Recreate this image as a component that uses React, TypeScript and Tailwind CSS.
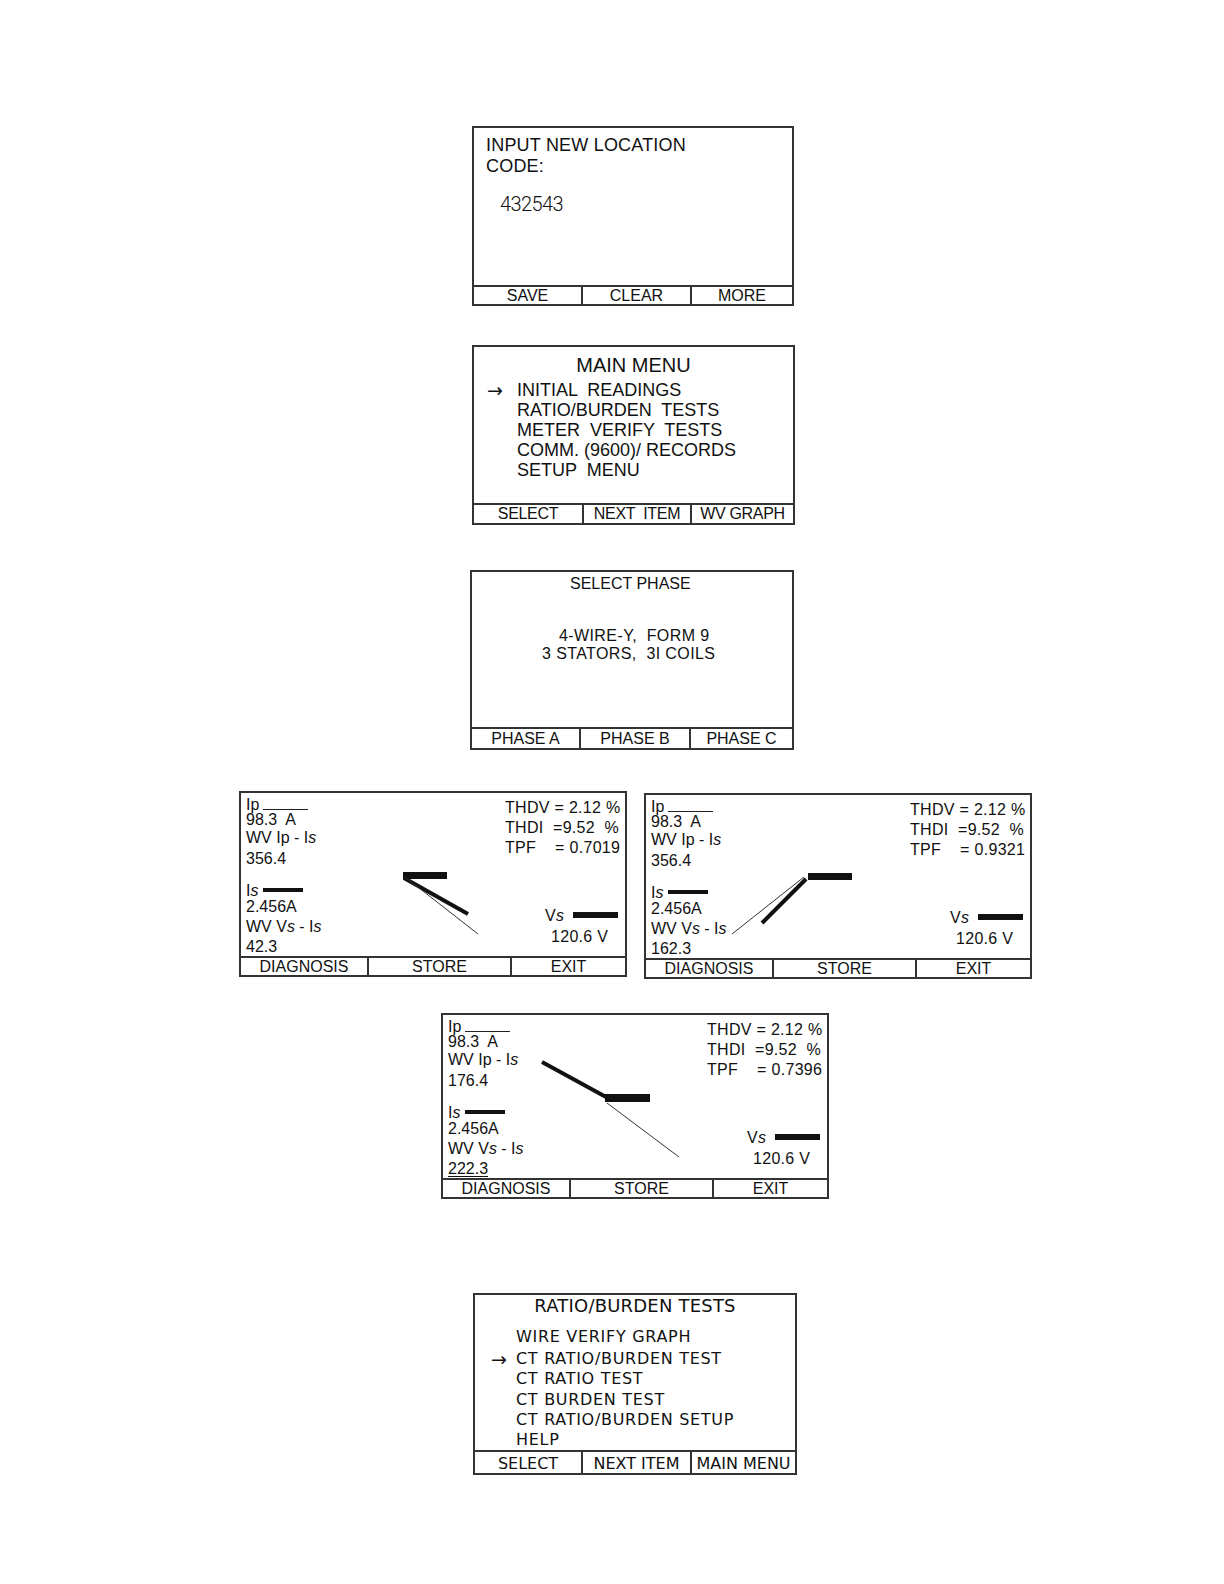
import type { ReactNode } from 'react';

const arial = "font-['Liberation_Sans',Arial,sans-serif]";
const dejavu = "font-['DejaVu_Sans',sans-serif]";

type KeysProps = { labels: string[]; cols: string; className?: string };

function SoftKeys({ labels, cols, className = '' }: KeysProps) {
  return (
    <div className={`grid shrink-0 border-t-2 border-[#333] ${cols} ${className}`}>
      {labels.map((label, i) => (
        <div key={label} className={`whitespace-pre text-center ${i > 0 ? 'border-l-2 border-[#333]' : ''}`}>
          {label}
        </div>
      ))}
    </div>
  );
}

function LocationScreen() {
  return (
    <div className={`ml-[472px] mt-[126px] flex h-[180px] w-[322px] flex-col border-2 border-[#333] ${arial}`}>
      <div className="flex-1 pl-[12px] pt-[7px]">
        <div className="text-[18px] leading-[21px] tracking-[0.2px]">INPUT NEW LOCATION</div>
        <div className="text-[18px] leading-[21px] tracking-[0.2px]">CODE:</div>
        <div className="ml-[14px] mt-[15px] font-['Roboto',sans-serif] text-[20px] font-light leading-[24px] tracking-[-0.6px]">
          432543
        </div>
      </div>
      <SoftKeys labels={['SAVE', 'CLEAR', 'MORE']} cols="grid-cols-[107px_109px_1fr]" className="h-[19px] text-[16px] leading-[17px]" />
    </div>
  );
}

type RowProps = { active?: boolean; children: ReactNode; className: string; slot: string };

function MenuRow({ active, children, className, slot }: RowProps) {
  return (
    <div className={`flex whitespace-pre ${className}`}>
      <span className={`font-['DejaVu_Sans',sans-serif] text-[19px] tracking-normal ${slot}`}>{active ? '→' : ''}</span>
      <span>{children}</span>
    </div>
  );
}

function MainMenu() {
  const items = ['INITIAL  READINGS', 'RATIO/BURDEN  TESTS', 'METER  VERIFY  TESTS', 'COMM. (9600)/ RECORDS', 'SETUP  MENU'];
  return (
    <div className={`ml-[472px] mt-[39px] flex h-[180px] w-[323px] flex-col border-2 border-[#333] ${arial}`}>
      <div className="flex-1 pt-[7px]">
        <div className="text-center text-[20px] leading-[22px]">MAIN MENU</div>
        <div className="mt-[4px] pl-[13px] text-[18px] leading-[20px]">
          {items.map((item, i) => (
            <MenuRow key={item} active={i === 0} className="h-[20px]" slot="w-[30px]">
              {item}
            </MenuRow>
          ))}
        </div>
      </div>
      <SoftKeys labels={['SELECT', 'NEXT  ITEM', 'WV GRAPH']} cols="grid-cols-[108px_108px_1fr]" className="h-[20px] text-[16px] leading-[18px] tracking-[-0.3px]" />
    </div>
  );
}

function PhaseScreen() {
  return (
    <div className={`ml-[470px] mt-[45px] flex h-[180px] w-[324px] flex-col border-2 border-[#333] ${arial}`}>
      <div className="flex-1 pt-[3px] text-[16px] leading-[18px] whitespace-pre">
        <div className="pl-[98px]">SELECT PHASE</div>
        <div className="mt-[34px] pl-[87px] tracking-[0.4px]">4-WIRE-Y,  FORM 9</div>
        <div className="pl-[70px] tracking-[0.4px]">3 STATORS,  3I COILS</div>
      </div>
      <SoftKeys labels={['PHASE A', 'PHASE B', 'PHASE C']} cols="grid-cols-[107px_110px_1fr]" className="h-[21px] text-[16px] leading-[19px]" />
    </div>
  );
}

type Vec = { bar: [number, number, number, number]; thick: [number, number, number, number]; thin: [number, number, number, number] };

type GraphProps = { wv1: string; wv2: string; tpf: string; underline?: boolean; vec: Vec; className: string };

function GraphScreen({ wv1, wv2, tpf, underline, vec, className }: GraphProps) {
  return (
    <div className={`flex h-[186px] w-[388px] flex-col border-2 border-[#333] ${arial} ${className}`}>
      <div className="relative flex flex-1 text-[16px]">
        <svg className="pointer-events-none absolute left-0 top-0" width="384" height="162" viewBox="0 0 384 162">
          <rect x={vec.bar[0]} y={vec.bar[1]} width={vec.bar[2]} height={vec.bar[3]} fill="#111" />
          <line x1={vec.thick[0]} y1={vec.thick[1]} x2={vec.thick[2]} y2={vec.thick[3]} stroke="#111" strokeWidth="4" />
          <line x1={vec.thin[0]} y1={vec.thin[1]} x2={vec.thin[2]} y2={vec.thin[3]} stroke="#333" strokeWidth="1" />
        </svg>
        <div className="w-[264px] shrink-0 pl-[5px] pt-[3px] leading-[18px] whitespace-pre">
          <div className="h-[15px]">
            Ip<span className="ml-[4px] inline-block w-[45px] border-b border-[#222]" />
          </div>
          <div className="h-[18px]">98.3  A</div>
          <div className="h-[21px]">
            WV Ip - I<i>s</i>
          </div>
          <div className="h-[32px]">{wv1}</div>
          <div className="h-[16px]">
            I<i>s</i>
            <span className="ml-[5px] inline-block h-[4px] w-[40px] bg-[#111] align-[4px]" />
          </div>
          <div className="h-[20px]">2.456A</div>
          <div className="h-[20px]">
            WV V<i>s</i> - I<i>s</i>
          </div>
          <div className={underline ? 'underline underline-offset-[2px]' : ''}>{wv2}</div>
        </div>
        <div className="flex flex-col pt-[5px] leading-[20px] tracking-[0.3px] whitespace-pre">
          <div>THDV = 2.12 %</div>
          <div>THDI  =9.52  %</div>
          <div>TPF    = {tpf}</div>
          <div className="ml-[40px] mt-[48px] h-[21px]">
            V<i>s</i>
            <span className="ml-[9px] inline-block h-[6px] w-[45px] bg-[#111] align-[3px]" />
          </div>
          <div className="ml-[46px]">120.6 V</div>
        </div>
      </div>
      <SoftKeys labels={['DIAGNOSIS', 'STORE', 'EXIT']} cols="grid-cols-[126px_143px_1fr]" className="h-[20px] text-[16px] leading-[18px]" />
    </div>
  );
}

function RatioBurdenMenu() {
  const items = ['WIRE VERIFY GRAPH', 'CT RATIO/BURDEN TEST', 'CT RATIO TEST', 'CT BURDEN TEST', 'CT RATIO/BURDEN SETUP', 'HELP'];
  return (
    <div className={`ml-[473px] mt-[94px] flex h-[182px] w-[324px] flex-col border-2 border-[#333] ${dejavu}`}>
      <div className="flex-1">
        <div className="text-center text-[18px] leading-[22px] tracking-[0.2px]">RATIO/BURDEN TESTS</div>
        <div className="mt-[10px] pl-[16px] text-[16px] leading-[20px] tracking-[0.7px]">
          {items.map((item, i) => (
            <MenuRow key={item} active={i === 1} className={i === 0 ? 'h-[22px]' : 'h-[20.3px]'} slot="w-[25px]">
              {item}
            </MenuRow>
          ))}
        </div>
      </div>
      <SoftKeys labels={['SELECT', 'NEXT ITEM', 'MAIN MENU']} cols="grid-cols-[106px_109px_1fr]" className="h-[24px] text-[16px] leading-[23px]" />
    </div>
  );
}

export default function App() {
  return (
    <div className="flex min-h-[1584px] w-[1224px] flex-col items-start bg-white pb-[40px] text-[#111]">
      <LocationScreen />
      <MainMenu />
      <PhaseScreen />
      <div className="ml-[239px] mt-[41px] flex items-start gap-[17px]">
        <GraphScreen
          wv1="356.4"
          wv2="42.3"
          tpf="0.7019"
          className=""
          vec={{ bar: [162, 79, 44, 7], thick: [163, 85, 227, 121], thin: [164, 84, 237, 141] }}
        />
        <GraphScreen
          wv1="356.4"
          wv2="162.3"
          tpf="0.9321"
          className="mt-[2px]"
          vec={{ bar: [162, 78, 44, 7], thick: [160, 84, 116, 128], thin: [158, 82, 86, 139] }}
        />
      </div>
      <div className="ml-[441px] mt-[34px]">
        <GraphScreen
          wv1="176.4"
          wv2="222.3"
          tpf="0.7396"
          underline
          className=""
          vec={{ bar: [162, 79, 45, 8], thick: [99, 47, 163, 82], thin: [164, 88, 236, 142] }}
        />
      </div>
      <RatioBurdenMenu />
    </div>
  );
}
